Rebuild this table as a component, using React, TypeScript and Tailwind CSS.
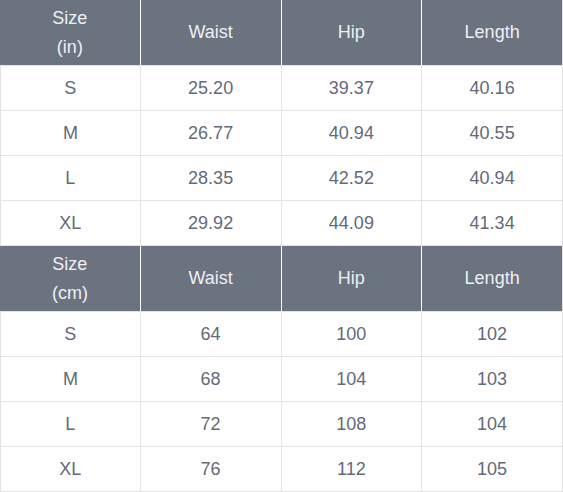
import React from "react";

const inRows = [
  ["S", "25.20", "39.37", "40.16"],
  ["M", "26.77", "40.94", "40.55"],
  ["L", "28.35", "42.52", "40.94"],
  ["XL", "29.92", "44.09", "41.34"],
];
const cmRows = [
  ["S", "64", "100", "102"],
  ["M", "68", "104", "103"],
  ["L", "72", "108", "104"],
  ["XL", "76", "112", "105"],
];

function Table({ unit, rows }: { unit: string; rows: string[][] }) {
  const heads = ["Waist", "Hip", "Length"];
  return (
    <div className="w-[563px]">
      <div className="grid grid-cols-4 h-[66px] bg-[#6b7280] border-b border-[#e3e3e3]">
        <div className="flex flex-col items-center justify-center text-[18px] leading-[29px] text-[#eef0f3] border-r border-white">
          <span>Size</span>
          <span>({unit})</span>
        </div>
        {heads.map((h, i) => (
          <div
            key={h}
            className={
              "flex items-center justify-center text-[18px] text-[#eef0f3] " +
              (i < 2 ? "border-r border-white" : "border-r border-[#e3e3e3]")
            }
          >
            {h}
          </div>
        ))}
      </div>
      {rows.map((r, ri) => (
        <div key={ri} className="grid grid-cols-4 h-[45px] border-b border-[#e3e3e3] bg-white">
          {r.map((c, ci) => (
            <div
              key={ci}
              className={
                "flex items-center justify-center text-[18px] text-[#646a78] border-r border-[#e3e3e3] " +
                (ci === 0 ? "border-l" : "")
              }
            >
              {c}
            </div>
          ))}
        </div>
      ))}
    </div>
  );
}

export default function App() {
  return (
    <div className="w-[563px] h-[492px] bg-white" style={{ fontFamily: '"Liberation Sans", Arial, sans-serif' }}>
      <Table unit="in" rows={inRows} />
      <Table unit="cm" rows={cmRows} />
    </div>
  );
}
